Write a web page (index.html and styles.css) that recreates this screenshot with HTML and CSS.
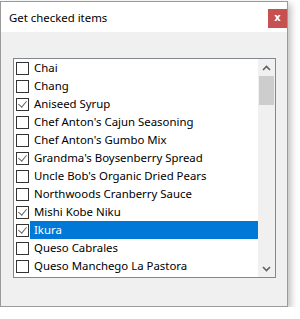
FILE: index.html
```html
<!DOCTYPE html>
<html lang="en">
<head>
    <meta charset="UTF-8">
    <title>Get checked items</title>
    <link rel="stylesheet" href="styles.css">
</head>
<body>
    <div class="window">
        <div class="titlebar">
            <span class="title">Get checked items</span>
            <span class="close">x</span>
        </div>
        <div class="content">
            <div class="listbox">
                <div class="items">
                    <div class="row"><span class="box"></span><span class="label">Chai</span></div>
                    <div class="row"><span class="box"></span><span class="label">Chang</span></div>
                    <div class="row"><span class="box checked"></span><span class="label">Aniseed Syrup</span></div>
                    <div class="row"><span class="box"></span><span class="label">Chef Anton's Cajun Seasoning</span></div>
                    <div class="row"><span class="box"></span><span class="label">Chef Anton's Gumbo Mix</span></div>
                    <div class="row"><span class="box checked"></span><span class="label">Grandma's Boysenberry Spread</span></div>
                    <div class="row"><span class="box"></span><span class="label">Uncle Bob's Organic Dried Pears</span></div>
                    <div class="row"><span class="box"></span><span class="label">Northwoods Cranberry Sauce</span></div>
                    <div class="row"><span class="box checked"></span><span class="label">Mishi Kobe Niku</span></div>
                    <div class="row selected"><span class="box checked"></span><span class="label">Ikura</span></div>
                    <div class="row"><span class="box"></span><span class="label">Queso Cabrales</span></div>
                    <div class="row"><span class="box"></span><span class="label">Queso Manchego La Pastora</span></div>
                </div>
                <div class="scrollbar">
                    <div class="arrow">
                        <svg width="9" height="6" viewBox="0 0 9 6"><polyline points="1,5 4.5,1.5 8,5" fill="none" stroke="#606060" stroke-width="1.6"/></svg>
                    </div>
                    <div class="track"><div class="thumb"></div></div>
                    <div class="arrow">
                        <svg width="9" height="6" viewBox="0 0 9 6"><polyline points="1,1 4.5,4.5 8,1" fill="none" stroke="#606060" stroke-width="1.6"/></svg>
                    </div>
                </div>
            </div>
        </div>
    </div>
</body>
</html>
```
FILE: styles.css
```css
body {
    margin: 0;
    background: #fff;
    font-family: 'Noto Sans', 'Open Sans', sans-serif;
    font-size: 11.4px;
    color: #000;
}

.window {
    box-sizing: border-box;
    width: 288px;
    height: 306px;
    margin-top: 1px;
    border: 1px solid #9a9a9a;
    background: #f0f0f0;
    box-shadow: 3px 3px 7px rgba(0, 0, 0, 0.25);
    display: flex;
    flex-direction: column;
}

.titlebar {
    height: 30px;
    background: #fff;
    display: flex;
    align-items: flex-start;
    justify-content: space-between;
}

.title {
    margin: 7px 0 0 8px;
    line-height: 17px;
}

.close {
    width: 19px;
    height: 19px;
    margin-top: 7px;
    background: #c75050;
    color: #fff;
    font-family: 'DejaVu Sans', sans-serif;
    font-weight: bold;
    font-size: 10px;
    line-height: 18px;
    text-align: center;
}

.content {
    flex: 1;
    padding: 26px 0 0 12px;
}

.listbox {
    box-sizing: border-box;
    width: 263px;
    height: 220px;
    border: 1px solid #828790;
    background: #fff;
    display: flex;
}

.items {
    flex: 1;
    overflow: hidden;
}

.row {
    height: 18px;
    display: flex;
    align-items: center;
    white-space: nowrap;
}

.box {
    box-sizing: border-box;
    flex: none;
    width: 13px;
    height: 13px;
    margin-left: 2px;
    border: 1px solid #333;
    background: #fff;
    position: relative;
}

.box.checked::after {
    content: "";
    position: absolute;
    left: 3px;
    top: 0px;
    width: 4px;
    height: 7px;
    border-right: 1px solid #666;
    border-bottom: 1px solid #666;
    transform: rotate(40deg);
}

.label {
    flex: 1;
    height: 18px;
    line-height: 18px;
    margin-left: 1px;
    padding-left: 4px;
}

.selected .label {
    background: #0078d7;
    color: #fff;
}

.scrollbar {
    width: 17px;
    background: #f0f0f0;
    display: flex;
    flex-direction: column;
}

.arrow {
    height: 17px;
    display: flex;
    align-items: center;
    justify-content: center;
}

.track {
    flex: 1;
}

.thumb {
    height: 29px;
    margin: 0 1px;
    background: #cdcdcd;
}
```
